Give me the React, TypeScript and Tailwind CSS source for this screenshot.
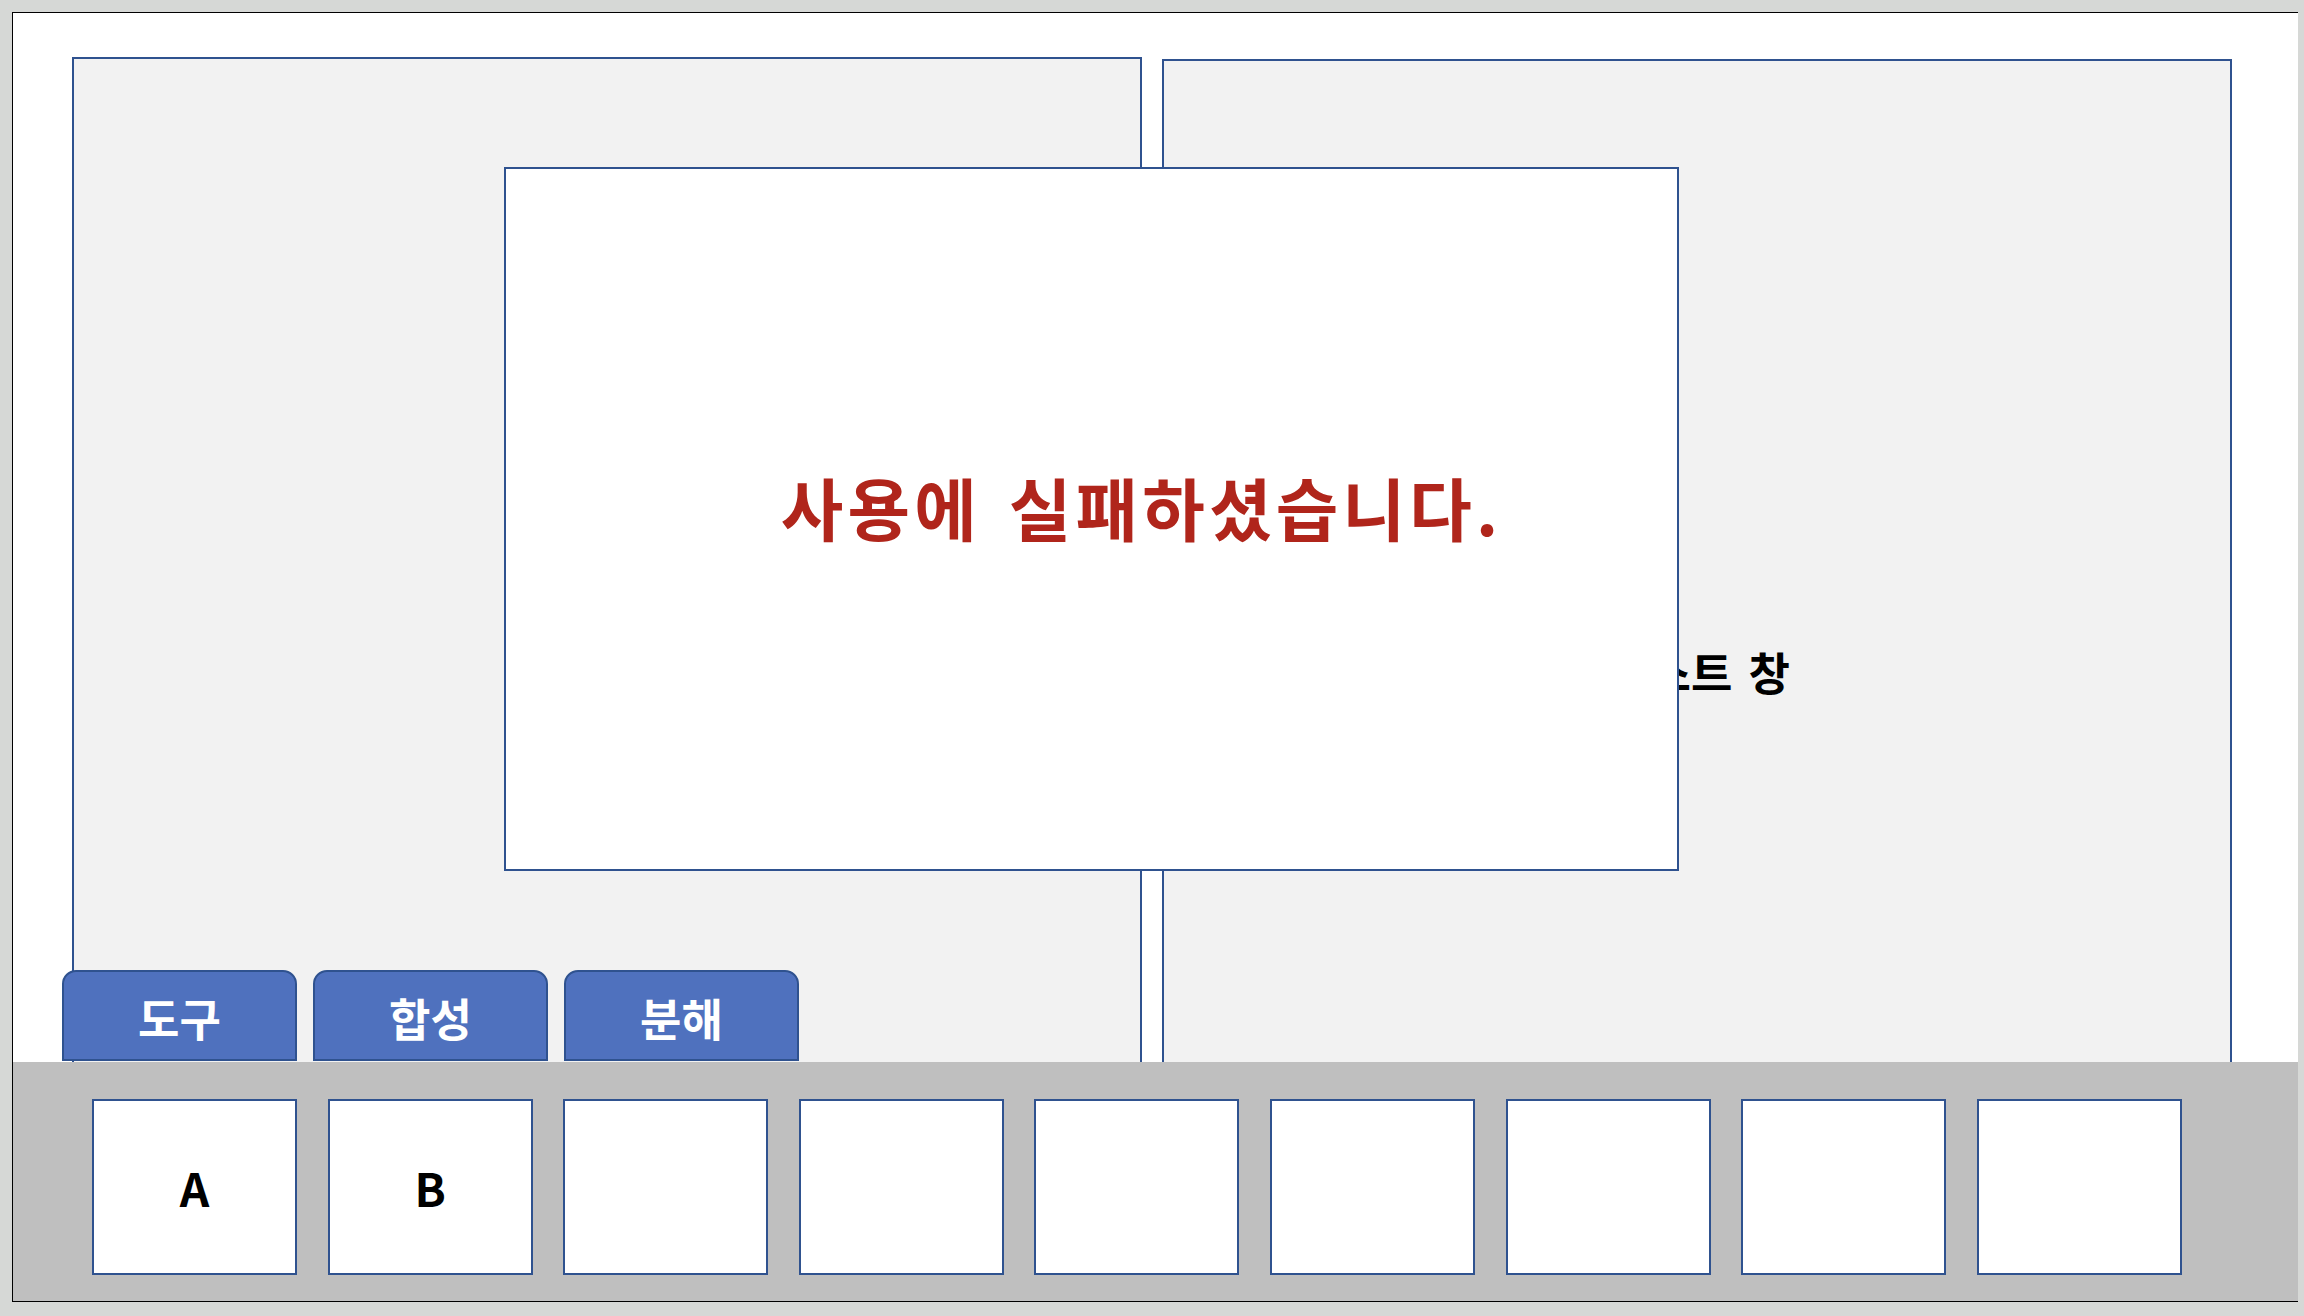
const kr = "font-['Noto_Sans_CJK_KR','Noto_Sans',sans-serif]";

const tabs = ['도구', '합성', '분해'];
const slots = ['A', 'B', '', '', '', '', '', '', ''];

function Tab({ label }: { label: string }) {
  return (
    <div className="flex h-[91px] w-[235px] items-center justify-center rounded-t-[14px] border-2 border-[#2f528f] bg-[#4f71be] pt-[4px]">
      <span className={`${kr} text-[45px] leading-none font-bold text-white`}>{label}</span>
    </div>
  );
}

function Slot({ label }: { label: string }) {
  return (
    <div className="flex h-[176px] w-[205px] shrink-0 items-center justify-center border-2 border-[#2f528f] bg-white">
      <span className={`${kr} text-[46px] leading-none font-bold text-black`}>{label}</span>
    </div>
  );
}

export default function App() {
  return (
    <div className="h-screen w-full bg-[#d6d8d6] pt-[12px] pl-[12px]">
      <div className="flex h-[1290px] w-[2286px] flex-col border-y border-l border-black bg-white">
        {/* work area */}
        <div className="relative flex h-[1049px] gap-[20px] pt-[44px] pr-[66px] pl-[59px]">
          <div className="w-[1070px] border-2 border-b-0 border-[#2f528f] bg-[#f2f2f2]" />
          <div className="mt-[2px] flex w-[1070px] flex-col items-center border-2 border-b-0 border-[#2f528f] bg-[#f2f2f2] pt-[588px] pl-[4px]">
            <span className={`${kr} text-[45px] leading-none font-bold text-black [word-spacing:6px]`}>텍스트 창</span>
          </div>

          {/* tabs */}
          <div className="absolute bottom-[1px] left-[49px] flex gap-[16px]">
            {tabs.map((t) => (
              <Tab key={t} label={t} />
            ))}
          </div>

          {/* popup */}
          <div className="absolute top-[154px] left-[491px] flex h-[704px] w-[1175px] items-center justify-center border-2 border-[#2f528f] bg-white pb-[24px] pl-[100px]">
            <span className={`${kr} text-[68px] leading-none font-bold tracking-[4.2px] text-[#b0251b] [word-spacing:8px]`}>
              사용에 실패하셨습니다.
            </span>
          </div>
        </div>

        {/* inventory bar */}
        <div className="flex flex-1 gap-[30.6px] bg-[#bfbfbf] pt-[37px] pl-[79px]">
          {slots.map((s, i) => (
            <Slot key={i} label={s} />
          ))}
        </div>
      </div>
    </div>
  );
}
